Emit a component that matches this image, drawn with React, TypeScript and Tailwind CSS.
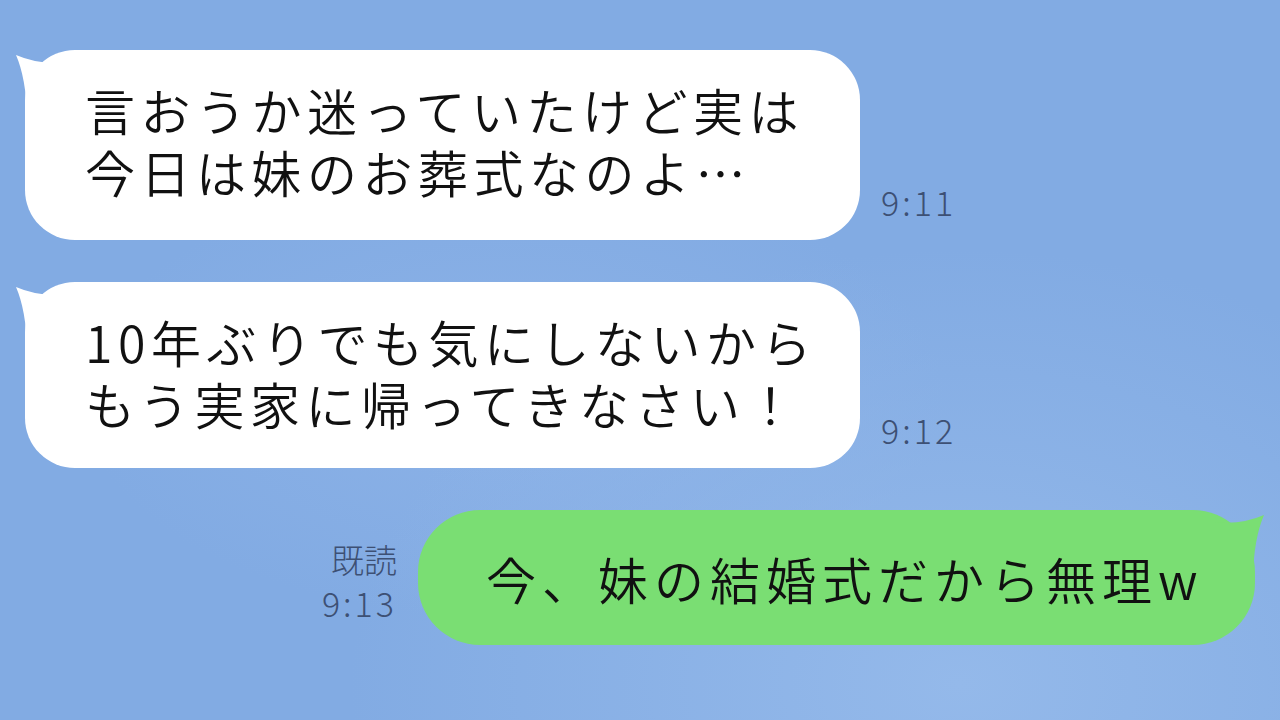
import React from 'react';

const jp = "font-['Noto_Sans_CJK_JP','Noto_Sans',sans-serif]";

function LeftTail() {
  return (
    <svg
      className="absolute left-[-12px] top-0 h-[70px] w-[70px]"
      viewBox="0 0 70 70"
    >
      <path d="M3 5 Q26 15 52 12 L52 66 L14 66 Q13 28 3 5 Z" fill="#ffffff" />
    </svg>
  );
}

function RightTail() {
  return (
    <svg
      className="absolute right-[-12px] top-0 h-[70px] w-[70px]"
      viewBox="0 0 70 70"
    >
      <path d="M67 5 Q44 15 18 12 L18 66 L56 66 Q57 28 67 5 Z" fill="#7ade73" />
    </svg>
  );
}

function Time({ label }: { label: string }) {
  return (
    <span className={`${jp} ml-[21px] mb-[19px] text-[34px] font-light leading-[38px] tracking-[3px] text-[#3d5074]`}>
      {label}
    </span>
  );
}

function Incoming({ lines, time, height }: { lines: string[]; time: string; height: string }) {
  return (
    <div className="flex items-end">
      <div className={`relative ml-[25px] w-[835px] ${height} rounded-[50px] bg-white`}>
        <LeftTail />
        <div className={`${jp} relative pl-[60px] pt-[28px] text-[50px] font-[350] leading-[62px] tracking-[5.5px] text-[#111111]`}>
          {lines.map((line) => (
            <div key={line} className="h-[62px] whitespace-nowrap">
              {line}
            </div>
          ))}
        </div>
      </div>
      <Time label={time} />
    </div>
  );
}

export default function App() {
  return (
    <div className="h-[720px] w-full overflow-hidden bg-[#82abe3] bg-[radial-gradient(ellipse_at_75%_95%,#94b9ea_0%,transparent_45%),radial-gradient(ellipse_at_40%_55%,#8cb2e7_0%,transparent_40%)]">
      <div className="flex flex-col pt-[50px]">
        <Incoming
          lines={['言おうか迷っていたけど実は', '今日は妹のお葬式なのよ…']}
          time="9:11"
          height="h-[190px]"
        />

        <div className="mt-[42px]">
          <Incoming
            lines={['10年ぶりでも気にしないから', 'もう実家に帰ってきなさい！']}
            time="9:12"
            height="h-[186px]"
          />
        </div>

        {/* My message */}
        <div className="mt-[42px] flex items-end justify-end pr-[25px]">
          <div className={`${jp} mb-[20px] mr-[21px] flex flex-col items-end font-light text-[#3d5074]`}>
            <span className="text-[33px] leading-[44px]">既読</span>
            <span className="text-[34px] leading-[44px] tracking-[3px]">9:13</span>
          </div>
          <div className="relative flex h-[135px] w-[837px] items-center rounded-[62px] bg-[#7ade73]">
            <RightTail />
            <span className={`${jp} relative pl-[68px] text-[50px] font-[350] leading-[62px] tracking-[6px] text-[#111111] whitespace-nowrap`}>
              今、妹の結婚式だから無理w
            </span>
          </div>
        </div>
      </div>
    </div>
  );
}
